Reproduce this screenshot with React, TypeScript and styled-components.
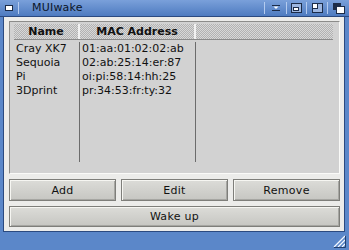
import React from 'react';
import styled, { createGlobalStyle } from 'styled-components';

interface Host {
  name: string;
  mac: string;
}

const hosts: Host[] = [
  { name: 'Cray XK7', mac: '01:aa:01:02:02:ab' },
  { name: 'Sequoia', mac: '02:ab:25:14:er:87' },
  { name: 'Pi', mac: 'oi:pi:58:14:hh:25' },
  { name: '3Dprint', mac: 'pr:34:53:fr:ty:32' },
];

const Global = createGlobalStyle`
  html, body {
    margin: 0;
    padding: 0;
    background: #5b87c9;
  }
  * {
    box-sizing: border-box;
  }
`;

export default function App() {
  return (
    <Window>
      <Global />
      <TitleBar>
        <Gadget $w={19}>
          <svg width="10" height="8" viewBox="0 0 10 8">
            <rect x="1.5" y="1.5" width="7" height="5" fill="#fff" stroke="#1c2c48" />
          </svg>
        </Gadget>
        <Title>MUIwake</Title>
        <Gadget $w={22} $sep>
          <svg width="10" height="8" viewBox="0 0 10 8">
            <path d="M1 1.5h8M1 6.5h8" stroke="#1c2c48" />
            <path d="M2.5 2.5h5L5 5z" fill="#fff" />
          </svg>
        </Gadget>
        <Gadget $w={20} $sep>
          <svg width="11" height="10" viewBox="0 0 11 10">
            <rect x="0.5" y="0.5" width="10" height="9" fill="#9db6e0" stroke="#1c2c48" />
            <rect x="2.5" y="4.5" width="5" height="3" fill="#fff" stroke="#1c2c48" />
          </svg>
        </Gadget>
        <Gadget $w={21} $sep>
          <svg width="11" height="10" viewBox="0 0 11 10">
            <rect x="0.5" y="0.5" width="10" height="9" fill="#9db6e0" stroke="#1c2c48" />
            <rect x="0.5" y="0.5" width="5" height="5" fill="#fff" stroke="#1c2c48" />
          </svg>
        </Gadget>
        <Gadget $w={22} $sep>
          <svg width="12" height="11" viewBox="0 0 12 11">
            <rect x="0.5" y="0.5" width="7" height="6" fill="#1c2c48" stroke="#1c2c48" />
            <rect x="3.5" y="3.5" width="8" height="7" fill="#fff" stroke="#1c2c48" />
          </svg>
        </Gadget>
      </TitleBar>
      <Body>
        <ListFrame>
          <List>
            <HeaderRow>
              <HeadCell>Name</HeadCell>
              <HeadCell>MAC Address</HeadCell>
              <HeadCell />
            </HeaderRow>
            <Rows>
              <Column>
                {hosts.map(h => (
                  <Cell key={h.name}>{h.name}</Cell>
                ))}
              </Column>
              <Column>
                {hosts.map(h => (
                  <Cell key={h.mac}>{h.mac}</Cell>
                ))}
              </Column>
              <Column $last />
            </Rows>
          </List>
        </ListFrame>
        <ButtonRow>
          <Button>Add</Button>
          <Button>Edit</Button>
          <Button>Remove</Button>
        </ButtonRow>
        <Button $wide>Wake up</Button>
      </Body>
      <BottomBar>
        <svg width="13" height="13" viewBox="0 0 13 13">
          <path d="M12 1L1 12" stroke="#f4f8ff" strokeWidth="1.2" />
          <path d="M12 5L5 12" stroke="#f4f8ff" strokeWidth="1.2" />
          <path d="M12 9L9 12" stroke="#f4f8ff" strokeWidth="1.2" />
          <path d="M12.5 1v11.5H1" fill="none" stroke="#23406e" />
        </svg>
      </BottomBar>
    </Window>
  );
}

const Window = styled.div`
  width: 349px;
  height: 250px;
  display: flex;
  flex-direction: column;
  background: #5b87c9;
  font-family: 'DejaVu Sans', 'Liberation Sans', sans-serif;
  font-size: 11px;
  color: #111;
`;

const TitleBar = styled.div`
  height: 17px;
  flex-shrink: 0;
  display: flex;
  align-items: center;
  background: linear-gradient(#7aa0da, #4e7bc0);
  border-bottom: 1px solid #2b4a80;
`;

const Gadget = styled.div<{ $w: number; $sep?: boolean }>`
  flex: none;
  width: ${p => p.$w}px;
  height: 12px;
  display: flex;
  align-items: center;
  justify-content: center;
  border-left: ${p => (p.$sep ? '1px solid #b4cbef' : 'none')};
  border-right: ${p => (p.$sep ? 'none' : '1px solid #b4cbef')};
`;

const Title = styled.div`
  flex: 1;
  padding-left: 13px;
  color: #0c1628;
  font-size: 11px;
  line-height: 16px;
  letter-spacing: 0.2px;
  white-space: nowrap;
`;

const Body = styled.div`
  flex: 1;
  margin: 0 4px 0 3px;
  background: #ececea;
  border-left: 1px solid #2b4a80;
  border-right: 1px solid #2b4a80;
  border-bottom: 1px solid #2b4a80;
  padding: 4px 4px 4px 5px;
  display: flex;
  flex-direction: column;
  gap: 5px;
`;

const ListFrame = styled.div`
  height: 153px;
  flex-shrink: 0;
  border: 1px solid;
  border-color: #8c8c8a #fafaf8 #fafaf8 #8c8c8a;
  background: #d2d2d2;
  padding: 2px 6px 5px 4px;
  display: flex;
`;

const List = styled.div`
  flex: 1;
  display: flex;
  flex-direction: column;
`;

const HeaderRow = styled.div`
  display: grid;
  grid-template-columns: 66px 116px 1fr;
  height: 16px;
  background-color: #c4c4c4;
  background-image: repeating-conic-gradient(#b2b2b2 0 25%, #d8d8d8 0 50%);
  background-size: 2px 2px;
  border-bottom: 1px solid #8a8a8a;
`;

const HeadCell = styled.div`
  font-weight: bold;
  text-align: center;
  line-height: 15px;
  border-right: 2px solid #f2f2f2;
  &:last-child {
    border-right: none;
  }
`;

const Rows = styled.div`
  flex: 1;
  display: grid;
  grid-template-columns: 66px 116px 1fr;
  padding-bottom: 6px;
  padding-top: 2px;
`;

const Column = styled.div<{ $last?: boolean }>`
  border-right: ${p => (p.$last ? 'none' : '1px solid #6c6c6c')};
  padding-left: 2px;
`;

const Cell = styled.div`
  height: 14px;
  line-height: 14px;
  white-space: nowrap;
`;

const ButtonRow = styled.div`
  display: grid;
  grid-template-columns: 1fr 1fr 1fr;
  gap: 5px;
`;

const Button = styled.button<{ $wide?: boolean }>`
  height: ${p => (p.$wide ? 21 : 22)}px;
  flex-shrink: 0;
  font-family: inherit;
  font-size: 11px;
  color: #111;
  border: 1px solid #7e7e7a;
  box-shadow: inset 1px 1px 0 #f6f6f2, inset -1px -1px 0 #a6a6a2;
  background: linear-gradient(#dcdcd8, #c6c6c2);
  padding: 0;
  letter-spacing: 0.3px;
`;

const BottomBar = styled.div`
  flex: 1;
  display: flex;
  justify-content: flex-end;
  align-items: flex-end;
  padding: 0 3px 2px 0;
`;
